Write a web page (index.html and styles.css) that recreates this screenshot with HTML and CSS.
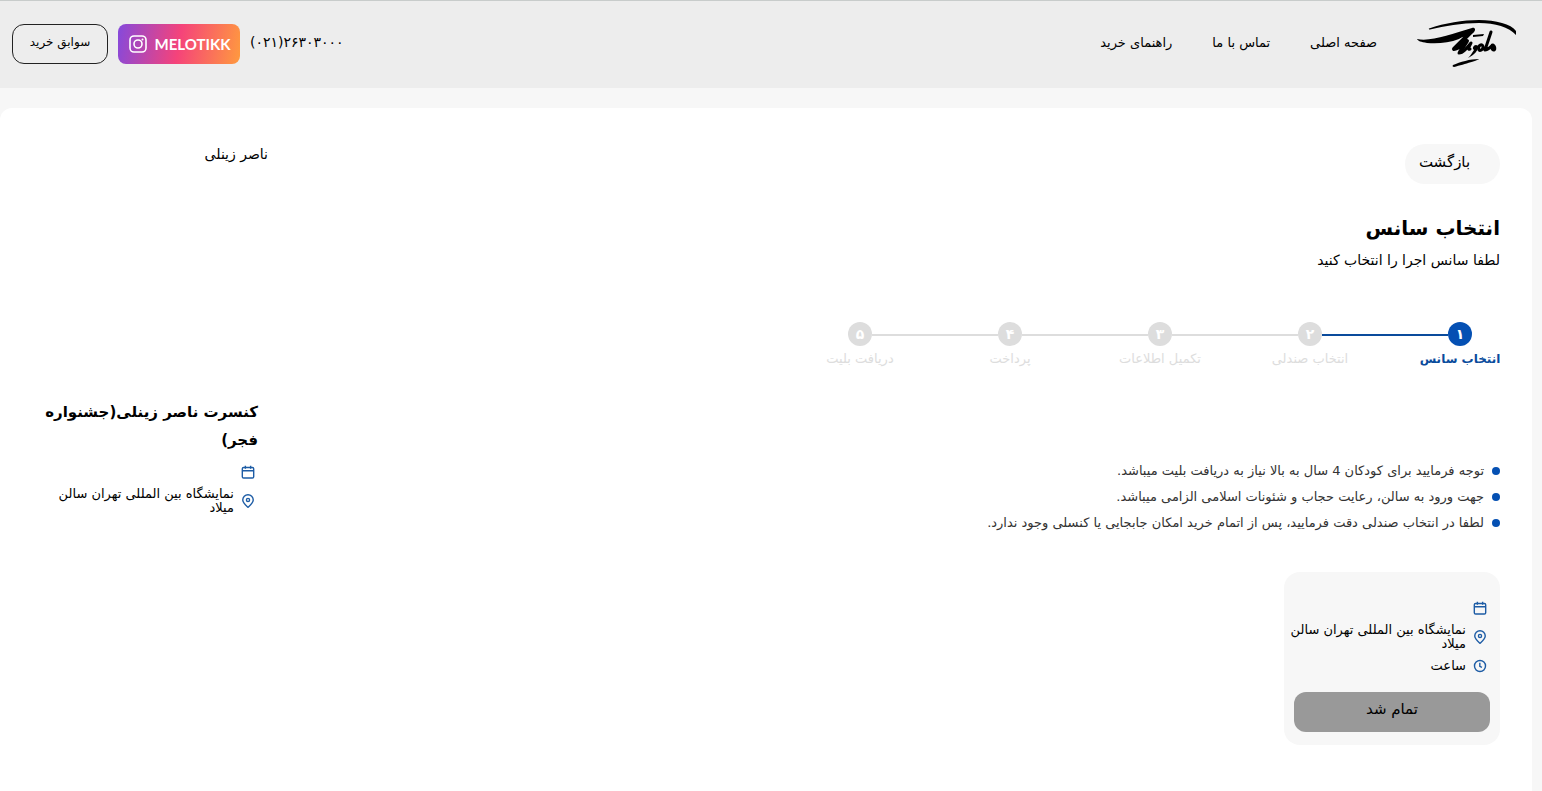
FILE: index.html
```
<!DOCTYPE html>
<html lang="fa" dir="rtl">
<head>
  <meta charset="UTF-8">
  <meta name="viewport" content="width=device-width, initial-scale=1.0">
  <title>انتخاب سانس</title>
  <link rel="stylesheet" href="styles.css">
</head>
<body>
  <svg class="sprite" aria-hidden="true">
    <symbol id="calendar" viewBox="0 0 16 16">
      <rect x="1.500" y="2.800" width="13" height="12" rx="1.500"/>
      <path d="M1.500 6.500h13M5 .8v3.500M11 .8v3.500"/>
    </symbol>
    <symbol id="pin" viewBox="0 0 16 16">
      <path d="M8 15.200C5 12.500 2 10 2 6.800a6 6 0 0 1 12 0C14 10 11 12.500 8 15.200z"/>
      <circle cx="8" cy="6.800" r="1.800"/>
    </symbol>
    <symbol id="clock" viewBox="0 0 16 16">
      <circle cx="8" cy="8" r="6.300"/>
      <path d="M7.800 4.300v4l2.400 1.200"/>
    </symbol>
  </svg>

  <header class="header">
    <a class="logo" href="#" aria-label="ملوتیک">
      <svg viewBox="0 0 100 50" width="100" height="50">
        <path d="M12 9.500C28 4 46 1 62 1C79 1 94 5 99 12L99 16C92 8 78 4 62 4C44 4 28 7 13 10.500C12 10.500 11.500 10 12 9.500z"/>
        <path d="M0 20C14 23 34 15 55 9C58 8 59 11 57 13L50 18C46 17 44 19 42 20C32 24 20 25 10 24C4 23 1 22 0 20z"/>
        <path class="thick" d="M55 12L37 30C41 30 46 25 50 22L43 33"/>
        <path class="stroke" d="M42 34C46 34 50 29 54 24C52 28 50 31 53 30"/>
        <path d="M56 16L67 15L66 17L56 18z"/>
        <path d="M51 39C54 36 55 34 57 31C54 29 58 24 61 27C62 31 57 36 51 39z"/>
        <path class="stroke" d="M62 31C60 26 66 24 66 28C66 31 63 32 62 31M74 13L68 31C71 31 73 28 76 26"/>
        <path d="M74 25C78 24 80 28 79 31C77 34 74 32 73 29z"/>
        <path d="M36 46C43 43 53 40 62 40C62 41 48 45 37 48C36 48 35 47 36 46z"/>
      </svg>
    </a>
    <nav class="nav">
      <a href="#">صفحه اصلی</a>
      <a href="#">تماس با ما</a>
      <a href="#">راهنمای خرید</a>
    </nav>
    <div class="actions">
      <a class="phone" href="tel:02126303000" dir="ltr"><bdo dir="ltr">(۰۲۱)۲۶۳۰۳۰۰۰</bdo></a>
      <a class="insta" href="#" dir="ltr">
        <svg viewBox="0 0 20 20" width="20" height="20">
          <rect x="2" y="2" width="16" height="16" rx="4"/>
          <circle cx="10" cy="10" r="4"/>
          <circle class="dot" cx="14.500" cy="5.500" r="1"/>
        </svg>
        MELOTIKK
      </a>
      <button class="history" type="button">سوابق خرید</button>
    </div>
  </header>

  <main class="page">
    <section class="content">
      <button class="back" type="button">بازگشت</button>
      <h1>انتخاب سانس</h1>
      <p class="subtitle">لطفا سانس اجرا را انتخاب کنید</p>

      <ol class="steps">
        <li class="step active"><span class="num">۱</span>انتخاب سانس</li>
        <li class="step"><span class="num">۲</span>انتخاب صندلی</li>
        <li class="step"><span class="num">۳</span>تکمیل اطلاعات</li>
        <li class="step"><span class="num">۴</span>پرداخت</li>
        <li class="step"><span class="num">۵</span>دریافت بلیت</li>
      </ol>

      <ul class="notes">
        <li>توجه فرمایید برای کودکان 4 سال به بالا نیاز به دریافت بلیت میباشد.</li>
        <li>جهت ورود به سالن، رعایت حجاب و شئونات اسلامی الزامی میباشد.</li>
        <li>لطفا در انتخاب صندلی دقت فرمایید، پس از اتمام خرید امکان جابجایی یا کنسلی وجود ندارد.</li>
      </ul>

      <div class="session">
        <div class="info"><svg class="icon"><use href="#calendar"/></svg></div>
        <div class="info"><svg class="icon"><use href="#pin"/></svg><span>نمایشگاه بین المللی تهران سالن میلاد</span></div>
        <div class="info"><svg class="icon"><use href="#clock"/></svg><span>ساعت</span></div>
        <button class="sold" type="button">تمام شد</button>
      </div>
    </section>

    <aside class="event">
      <p class="artist">ناصر زینلی</p>
      <div class="details">
        <h2>کنسرت ناصر زینلی(جشنواره فجر)</h2>
        <div class="info"><svg class="icon"><use href="#calendar"/></svg></div>
        <div class="info"><svg class="icon"><use href="#pin"/></svg><span>نمایشگاه بین المللی تهران سالن میلاد</span></div>
      </div>
    </aside>
  </main>
</body>
</html>
```
FILE: styles.css
```
* { box-sizing: border-box; }
body { margin: 0; min-height: 100vh; display: flex; flex-direction: column; background: #f7f7f7; color: #000; font-family: "DejaVu Sans", sans-serif; font-size: 13px; }
h1, h2, p, ol, ul { margin: 0; padding: 0; list-style: none; }
a { color: inherit; text-decoration: none; }
button { font-family: inherit; color: inherit; cursor: pointer; border: none; }
.sprite { display: none; }

.header { display: flex; align-items: center; height: 88px; padding: 0 25px 1px 12px; background: #ededed; border-top: 1px solid #c8cccb; }
.logo svg { display: block; }
.logo .thick, .logo .stroke { fill: none; stroke: #000; stroke-width: 3; stroke-linecap: round; stroke-linejoin: round; }
.logo .thick { stroke-width: 4; }
.nav { display: flex; gap: 40px; margin-right: 40px; padding-bottom: 4px; }
.actions { display: flex; align-items: center; gap: 10px; margin-right: auto; }
.phone { font-size: 14px; padding-bottom: 4px; }
.insta { display: flex; align-items: center; justify-content: center; gap: 7px; width: 122px; height: 40px; border-radius: 8px; color: #fff; font: bold 15px Lato, sans-serif; background: linear-gradient(100deg, #8549dc, #f5437a 50%, #ff9a3e); }
.insta svg { fill: none; stroke: #fff; stroke-width: 1.6; }
.insta .dot { fill: #fff; stroke: none; }
.history { width: 96px; height: 40px; padding: 0 0 4px; border: 1px solid #222; border-radius: 12px; background: none; font-size: 12px; }

.page { flex: 1; display: flex; justify-content: space-between; margin: 20px 10px 0 0; padding: 36px 32px 0 0; background: #fff; border-radius: 12px 12px 0 0; }
.back { display: block; width: 95px; height: 40px; padding: 0 16px 4px 0; border-radius: 20px; background: #f7f7f7; font-size: 15px; }
h1 { margin-top: 28px; font-size: 20px; line-height: 32px; }
.subtitle { font-size: 14px; line-height: 32px; }

.steps { display: flex; margin: 46px -35px 0 0; color: #ddd; }
.step { position: relative; display: flex; flex-direction: column; align-items: center; width: 150px; line-height: 26px; white-space: nowrap; }
.step::after { content: ""; position: absolute; top: 12px; right: 87px; width: 126px; height: 2px; background: #ddd; }
.step:last-child::after { display: none; }
.num { width: 24px; height: 24px; border-radius: 50%; background: #ddd; color: #fff; font-size: 14px; font-weight: bold; line-height: 24px; text-align: center; }
.active { color: #0a4b9c; font-size: 12px; font-weight: bold; }
.active .num { background: #0550b3; }
.active::after { background: #0a4b9c; }

.notes { margin-top: 86px; color: #333; line-height: 26px; }
.notes li { display: flex; align-items: center; gap: 8px; }
.notes li::before { content: ""; width: 8px; height: 8px; border-radius: 50%; background: #0550b3; }

.session { width: 216px; margin-top: 36px; padding: 28px 10px 13px; border-radius: 16px; background: #f7f7f7; }
.info { display: flex; align-items: center; gap: 7px; min-height: 16px; margin: 0 0 7px -8px; padding-right: 3px; line-height: 14px; }
.icon { flex: none; width: 14px; height: 14px; fill: none; stroke: #1d5ca5; stroke-width: 1.6; }
.sold { display: block; width: 100%; height: 40px; margin-top: 18px; padding: 0 0 6px; border-radius: 12px; background: #999; font-size: 15px; }

.event { width: 268px; }
.artist { font-size: 14px; line-height: 20px; }
.details { width: 236px; margin-top: 234px; padding: 0 10px; }
.event h2 { margin-bottom: 10px; font-size: 15px; line-height: 28px; }
.event .info { max-width: 204px; }
```
